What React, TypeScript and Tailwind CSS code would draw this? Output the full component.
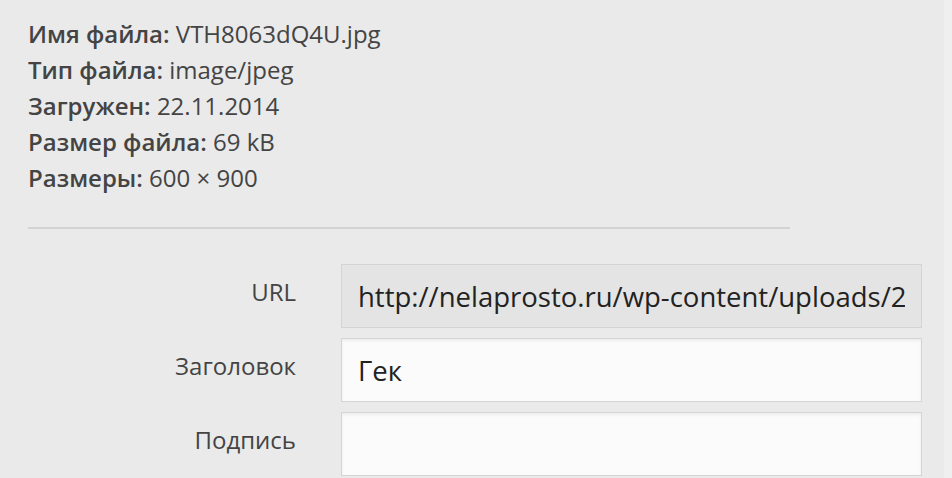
const details: { label: string; value: string }[] = [
  { label: "Имя файла:", value: "VTH8063dQ4U.jpg" },
  { label: "Тип файла:", value: "image/jpeg" },
  { label: "Загружен:", value: "22.11.2014" },
  { label: "Размер файла:", value: "69 kB" },
  { label: "Размеры:", value: "600 × 900" },
];

const fields: { label: string; value: string; readOnly?: boolean }[] = [
  { label: "URL", value: "http://nelaprosto.ru/wp-content/uploads/2014/11/VTH8063dQ4U.jpg", readOnly: true },
  { label: "Заголовок", value: "Гек" },
  { label: "Подпись", value: "" },
];

export default function App() {
  return (
    <div
      className="flex h-[478px] w-[952px] overflow-hidden bg-[#eaeaea] text-[#444]"
      style={{ fontFamily: '"Open Sans", "Noto Sans", sans-serif' }}
    >
      <div className="flex-1 pl-[28px] pt-[16px]">
        <div className="text-[24px] leading-[36px]">
          {details.map((d) => (
            <div key={d.label} className="whitespace-nowrap">
              <span className="font-semibold">{d.label}</span> {d.value}
            </div>
          ))}
        </div>

        <div className="mt-[31px] w-[762px] border-t-2 border-[#d3d3d3]" />

        <div className="mt-[35px] flex flex-col gap-[10px]">
          {fields.map((f) => (
            <div key={f.label} className="flex items-start gap-[45px]">
              <label className="w-[268px] pt-[10px] text-right text-[24px] leading-[36px] text-[#444]">
                {f.label}
              </label>
              <input
                readOnly
                value={f.value}
                className={`h-[64px] w-[581px] border border-[#d4d4d4] px-[16px] text-[27.5px] text-[#222] outline-none ${
                  f.readOnly ? "bg-[#e4e4e4]" : "bg-[#fbfbfb] shadow-[inset_0_2px_3px_rgba(0,0,0,0.06)]"
                }`}
              />
            </div>
          ))}
        </div>
      </div>
      <div className="w-[8px] bg-[#efefef]" />
    </div>
  );
}
